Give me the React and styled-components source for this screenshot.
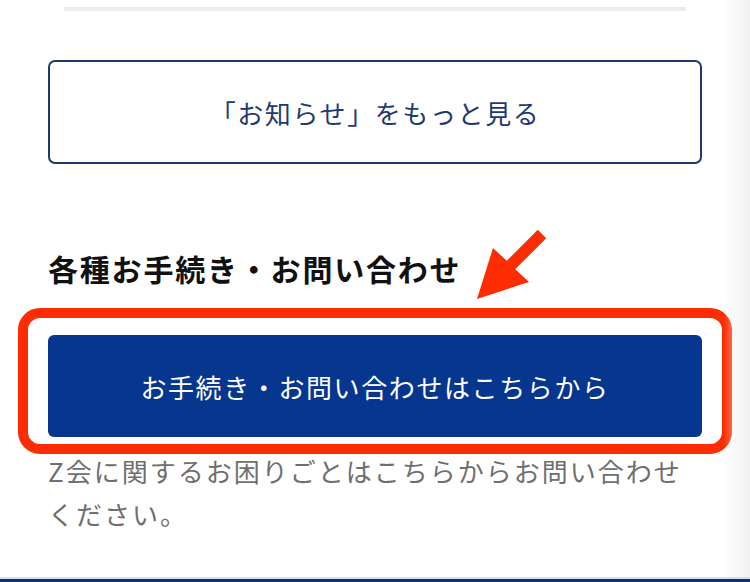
import React from "react";
import styled, { createGlobalStyle } from "styled-components";

const GlobalStyle = createGlobalStyle`
  html, body { margin: 0; padding: 0; background: #ffffff; }
  body {
    font-family: "Noto Sans CJK JP", "Noto Sans", sans-serif;
    width: 750px;
    overflow: hidden;
  }
  * { box-sizing: border-box; }
`;

const Page = styled.div`
  position: relative;
  width: 750px;
  height: 582px;
  display: flex;
  flex-direction: column;
  overflow: hidden;
`;

const Content = styled.main`
  position: relative;
  flex: 1;
  display: flex;
  flex-direction: column;
  padding-top: 7px;
  &::after {
    content: "";
    position: absolute;
    top: 0;
    right: 0;
    bottom: 0;
    width: 26px;
    background: linear-gradient(to right, rgba(242, 242, 242, 0), #f1f1f1);
    pointer-events: none;
  }
`;

const Divider = styled.hr`
  margin: 0 64px;
  height: 4px;
  border: none;
  background: #ececec;
`;

const OutlineButton = styled.a`
  margin: 49px 48px 0;
  height: 104px;
  display: flex;
  align-items: center;
  justify-content: center;
  border: 2.5px solid #1d3a70;
  border-radius: 7px;
  color: #1e3a72;
  font-size: 26px;
  letter-spacing: 1.6px;
  text-decoration: none;
`;

const Section = styled.section`
  position: relative;
  display: flex;
  flex-direction: column;
  margin-top: 84px;
`;

const Heading = styled.h2`
  margin: 0 48px;
  font-size: 30px;
  line-height: 40px;
  font-weight: 700;
  letter-spacing: 1.8px;
  color: #111111;
`;

const ButtonWrap = styled.div`
  position: relative;
  margin: 47px 48px 0;
`;

const PrimaryButton = styled.a`
  height: 102px;
  display: flex;
  align-items: center;
  justify-content: center;
  background: #07368f;
  border-radius: 6px;
  color: #ffffff;
  font-size: 26px;
  letter-spacing: 1.6px;
  text-decoration: none;
`;

const Highlight = styled.div`
  position: absolute;
  top: -27px;
  left: -30px;
  right: -30px;
  bottom: -17px;
  border: 10px solid #fe2c03;
  border-radius: 22px;
  pointer-events: none;
`;

const Arrow = styled.svg`
  position: absolute;
  left: 470px;
  top: -26px;
  width: 85px;
  height: 85px;
  pointer-events: none;
`;

const Note = styled.p`
  margin: 12px 48px 0;
  font-size: 26px;
  line-height: 43px;
  letter-spacing: 2px;
  color: #6f6f6f;
`;

const Footer = styled.footer`
  height: 5px;
  border-top: 2px solid #d4dfed;
  background: #0d2d78;
`;

export default function App() {
  return (
    <>
      <GlobalStyle />
      <Page>
        <Content>
          <Divider />
          <OutlineButton href="#">「お知らせ」をもっと見る</OutlineButton>
          <Section>
            <Heading>各種お手続き・お問い合わせ</Heading>
            <Arrow viewBox="470 222 85 85" aria-hidden="true">
              <polygon
                fill="#fe2c03"
                points="537.8,229.8 546.2,238.2 515.2,269.2 529,282 477,299 493,248 506.8,260.8"
              />
            </Arrow>
            <ButtonWrap>
              <PrimaryButton href="#">お手続き・お問い合わせはこちらから</PrimaryButton>
              <Highlight />
            </ButtonWrap>
          </Section>
          <Note>Z会に関するお困りごとはこちらからお問い合わせください。</Note>
        </Content>
        <Footer />
      </Page>
    </>
  );
}
